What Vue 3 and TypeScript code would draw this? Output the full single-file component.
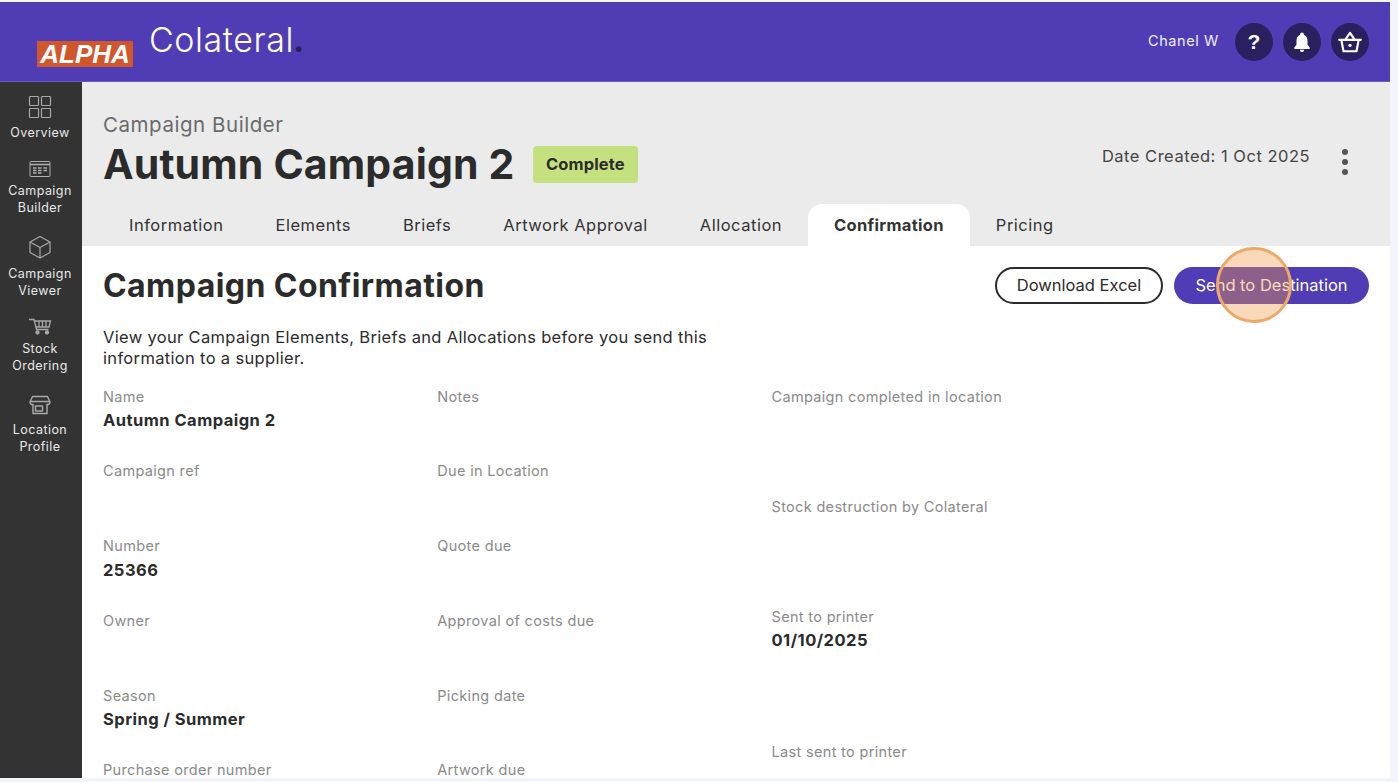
<script setup lang="ts">
const nav = [
  { label: ['Overview'], icon: 'grid' },
  { label: ['Campaign', 'Builder'], icon: 'table' },
  { label: ['Campaign', 'Viewer'], icon: 'box' },
  { label: ['Stock', 'Ordering'], icon: 'cart' },
  { label: ['Location', 'Profile'], icon: 'store' },
]
const tabs = ['Information', 'Elements', 'Briefs', 'Artwork Approval', 'Allocation', 'Confirmation', 'Pricing']
const col1 = [
  { k: 'Name', v: 'Autumn Campaign 2' },
  { k: 'Campaign ref', v: '' },
  { k: 'Number', v: '25366' },
  { k: 'Owner', v: '' },
  { k: 'Season', v: 'Spring / Summer' },
  { k: 'Purchase order number', v: '' },
]
const col2 = ['Notes', 'Due in Location', 'Quote due', 'Approval of costs due', 'Picking date', 'Artwork due']
const col3 = [
  { k: 'Campaign completed in location', v: '', c: 'h110' },
  { k: 'Stock destruction by Colateral', v: '', c: 'h110' },
  { k: 'Sent to printer', v: '01/10/2025', c: 'h135' },
  { k: 'Last sent to printer', v: '', c: '' },
]
</script>

<template>
  <div class="page">
    <header class="top">
      <div class="brand">
        <span class="alpha">ALPHA</span>
        <span class="logo">Colateral<i>.</i></span>
      </div>
      <div class="user">
        <span class="uname">Chanel W</span>
        <span class="round q">?</span>
        <span class="round">
          <svg width="22" height="22" viewBox="0 0 24 24" fill="#fff"><path d="M12 1.5a2 2 0 0 0-2 2v.6C7.2 5 6 7.6 6 10.5V15l-2.4 3v1.5h16.800V18L18 15v-4.500c0-2.900-1.200-5.500-4-6.400v-.6a2 2 0 0 0-2-2zM9.600 20.500a2.400 2.400 0 0 0 4.800 0z"/></svg>
        </span>
        <span class="round">
          <svg width="26" height="26" viewBox="0 0 24 24" fill="none" stroke="#fff" stroke-width="2" stroke-linejoin="round" stroke-linecap="round"><path d="M2 10h20M4 10l2 10.500h12L20 10M7.500 10L12 3.500 16.500 10"/><circle cx="12" cy="15" r="1.500" fill="#fff" stroke="none"/></svg>
        </span>
      </div>
    </header>
    <div class="body">
      <aside class="side">
        <div v-for="n in nav" :key="n.icon" class="nav" :class="'nav-' + n.icon">
          <svg v-if="n.icon === 'grid'" width="24" height="24" viewBox="0 0 24 24" fill="none" stroke="#a8a8a8" stroke-width="1.200"><rect x="1.500" y="1.500" width="9" height="9" rx=".8"/><rect x="13.500" y="1.500" width="9" height="9" rx=".8"/><rect x="1.500" y="13.500" width="9" height="9" rx=".8"/><rect x="13.500" y="13.500" width="9" height="9" rx=".8"/></svg>
          <svg v-else-if="n.icon === 'table'" width="24" height="18" viewBox="0 0 24 18" fill="none" stroke="#b0b0b0" stroke-width="1"><rect x="2" y="1.500" width="20" height="15" rx="1"/><path d="M2 4.500h20" stroke-width="1.500"/><path d="M5 8h3.500M10 8h3.500M15.500 8h3.500M5 10.500h3.500M10 10.500h3.500M15.500 10.500h3.500M5 13h3.500M10 13h3.500" stroke-width="1.300"/></svg>
          <svg v-else-if="n.icon === 'box'" width="24" height="24" viewBox="0 0 24 24" fill="none" stroke="#a8a8a8" stroke-width="1.200" stroke-linejoin="round"><path d="M12 1.500l10 5.500v10.500l-10 5.500-10-5.500V7zM2 7l10 5.500L22 7M12 12.500V23"/></svg>
          <svg v-else-if="n.icon === 'cart'" width="24" height="17" viewBox="0 0 24 17" fill="none" stroke="#a8a8a8" stroke-width="1.300"><path d="M1 1.500h5l2.500 10h12"/><path d="M6.200 3h16.300l-1.500 6H7.800"/><path d="M11 3v6M14.500 3v6M18 3v6"/><circle cx="9.500" cy="14.500" r="1.500" fill="#a8a8a8"/><circle cx="19" cy="14.500" r="1.500" fill="#a8a8a8"/></svg>
          <svg v-else width="24" height="20" viewBox="0 0 24 20" fill="none" stroke="#a8a8a8" stroke-width="1.500" stroke-linejoin="round"><path d="M4.500 1.500h15l2.500 5.500c0 1.800-1.500 3-3 2.500v9H5v-9C3.500 10 2 8.800 2 7zM2 6.500h20"/><rect x="7.500" y="11" width="7" height="5"/></svg>
          <div class="nl"><div v-for="l in n.label" :key="l">{{ l }}</div></div>
        </div>
      </aside>
      <main class="main">
        <section class="head">
          <div class="head-row">
            <div>
              <div class="crumb">Campaign Builder</div>
              <div class="title-row">
                <h1>Autumn Campaign 2</h1>
                <span class="badge">Complete</span>
              </div>
            </div>
            <div class="meta">
              <span>Date Created: 1 Oct 2025</span>
              <span class="dots"><i></i><i></i><i></i></span>
            </div>
          </div>
          <nav class="tabs">
            <span v-for="t in tabs" :key="t" class="tab" :class="{ on: t === 'Confirmation' }">{{ t }}</span>
          </nav>
        </section>
        <section class="content">
          <div class="c-head">
            <h2>Campaign Confirmation</h2>
            <div class="btns">
              <span class="btn ghost">Download Excel</span>
              <span class="btn solid">Send to Destination<b class="pulse"></b></span>
            </div>
          </div>
          <p class="intro">View your Campaign Elements, Briefs and Allocations before you send this information to a supplier.</p>
          <div class="cols">
            <div class="col">
              <div v-for="f in col1" :key="f.k" class="field f1">
                <div class="k">{{ f.k }}</div>
                <div class="v">{{ f.v }}</div>
              </div>
            </div>
            <div class="col">
              <div v-for="k in col2" :key="k" class="field f1">
                <div class="k">{{ k }}</div>
              </div>
            </div>
            <div class="col">
              <div v-for="f in col3" :key="f.k" class="field" :class="f.c">
                <div class="k">{{ f.k }}</div>
                <div class="v">{{ f.v }}</div>
              </div>
            </div>
          </div>
        </section>
      </main>
    </div>
  </div>
</template>

<style>
html, body { margin: 0; overflow: hidden; background: #f2f5fb; }
</style>

<style scoped>
.page { width: 1390px; height: 776px; margin-top: 2px; background: #fff; font-family: Inter, "Noto Sans", sans-serif; display: flex; flex-direction: column; overflow: hidden; color: #2b2b2b; }
.top { height: 80px; background: #503cb4; border-bottom: 1px solid #6c5ac4; box-sizing: border-box; display: flex; align-items: center; justify-content: space-between; padding: 0 21px 0 36px; flex: none; }
.brand { position: relative; width: 280px; height: 79px; }
.alpha { position: absolute; left: 1px; top: 39px; width: 96px; height: 26px; background: #d2562c; color: #fff; font: italic 700 26px/27px "Liberation Sans", sans-serif; text-align: center; }
.logo { position: absolute; left: 113px; top: 18px; font-size: 34px; line-height: 40px; color: #fff; font-weight: 300; letter-spacing: .55px; }
.logo i { color: #2a2060; font-style: normal; font-weight: 700; margin-left: -1px; }
.user { display: flex; align-items: center; gap: 10px; }
.uname { color: #f0eefa; font-size: 14.500px; letter-spacing: .6px; margin-right: 6px; margin-top: -2px; }
.round { width: 38px; height: 38px; border-radius: 50%; background: #2a2060; display: flex; align-items: center; justify-content: center; color: #fff; }
.q { font: 700 21px "Liberation Sans", sans-serif; }
.body { flex: 1; display: flex; min-height: 0; }
.side { width: 82px; box-sizing: border-box; padding: 13px 2px 0 0; flex: none; background: #333; display: flex; flex-direction: column; }
.nav { display: flex; flex-direction: column; align-items: center; color: #e8e8e8; font-size: 12.500px; line-height: 17px; letter-spacing: .45px; text-align: center; }
.nav svg { display: block; }
.nl { margin-top: 5px; }
.nav-grid { height: 65px; }
.nav-table { height: 75px; }
.nav-table .nl { margin-top: 4px; }
.nav-box { height: 83px; }
.nav-box .nl { margin-top: 6px; }
.nav-cart { height: 77px; }
.nav-cart .nl { margin-top: 5px; }
.nav-store .nl { margin-top: 7px; line-height: 16.500px; }
.main { flex: 1; min-width: 0; display: flex; flex-direction: column; }
.head { background: #ebebeb; height: 164px; padding: 29px 0 0 21px; display: flex; flex-direction: column; justify-content: space-between; box-sizing: border-box; flex: none; }
.head-row { display: flex; justify-content: space-between; align-items: flex-start; padding-right: 42px; }
.crumb { font-size: 20.500px; line-height: 27px; letter-spacing: .55px; color: #6a6a6a; }
.title-row { display: flex; align-items: center; gap: 18px; }
h1 { margin: 0; font-size: 41px; line-height: 52px; font-weight: 700; letter-spacing: .15px; }
.badge { background: #c5e07f; border-radius: 4px; padding: 0 13.500px; height: 37px; line-height: 37px; font-size: 16.500px; letter-spacing: .1px; font-weight: 700; color: #2b2b2b; }
.meta { display: flex; align-items: flex-start; gap: 32px; font-size: 16.500px; line-height: 20px; letter-spacing: .5px; margin-top: 35px; color: #444; }
.dots { display: flex; flex-direction: column; gap: 4px; margin-top: 3px; }
.dots i { width: 6px; height: 6px; border-radius: 50%; background: #555; display: block; }
.tabs { display: flex; height: 42px; }
.tab { font-size: 16.500px; line-height: 42px; letter-spacing: .51px; padding: 0 26px; color: #333; border-radius: 14px 14px 0 0; white-space: nowrap; }
.tab.on { background: #fff; font-weight: 700; letter-spacing: .3px; }
.content { padding: 0 21px; flex: 1; min-height: 0; position: relative; }
.c-head { display: flex; justify-content: space-between; align-items: center; height: 78px; }
h2 { margin: 0; font-size: 32px; font-weight: 700; letter-spacing: .43px; }
.btns { display: flex; gap: 11px; }
.btn { height: 37px; line-height: 37px; border-radius: 19px; font-size: 16.500px; text-align: center; box-sizing: border-box; position: relative; display: block; }
.ghost { width: 168px; border: 2.500px solid #2b2b2b; line-height: 32px; background: #fff; }
.solid { width: 195px; background: #503cb4; color: #fff; }
.pulse { position: absolute; left: 42px; top: -20px; width: 76px; height: 76px; border-radius: 50%; box-sizing: border-box; background: rgba(239,155,71,.38); border: 3px solid #eca96a; }
.intro { margin: 0; width: 640px; font-size: 16.500px; line-height: 21px; letter-spacing: .33px; margin-top: 2.500px; }
.cols { display: grid; grid-template-columns: 334.250px 334.250px 1fr; margin-top: 18px; }
.k { font-size: 14.500px; line-height: 20px; letter-spacing: .33px; color: #8a8a8a; }
.v { font-size: 16.500px; line-height: 24px; letter-spacing: .47px; font-weight: 700; color: #2b2b2b; margin-top: 1.500px; }
.f1 { height: 74.800px; }
.h110 { height: 110px; }
.h135 { height: 135px; }
</style>
